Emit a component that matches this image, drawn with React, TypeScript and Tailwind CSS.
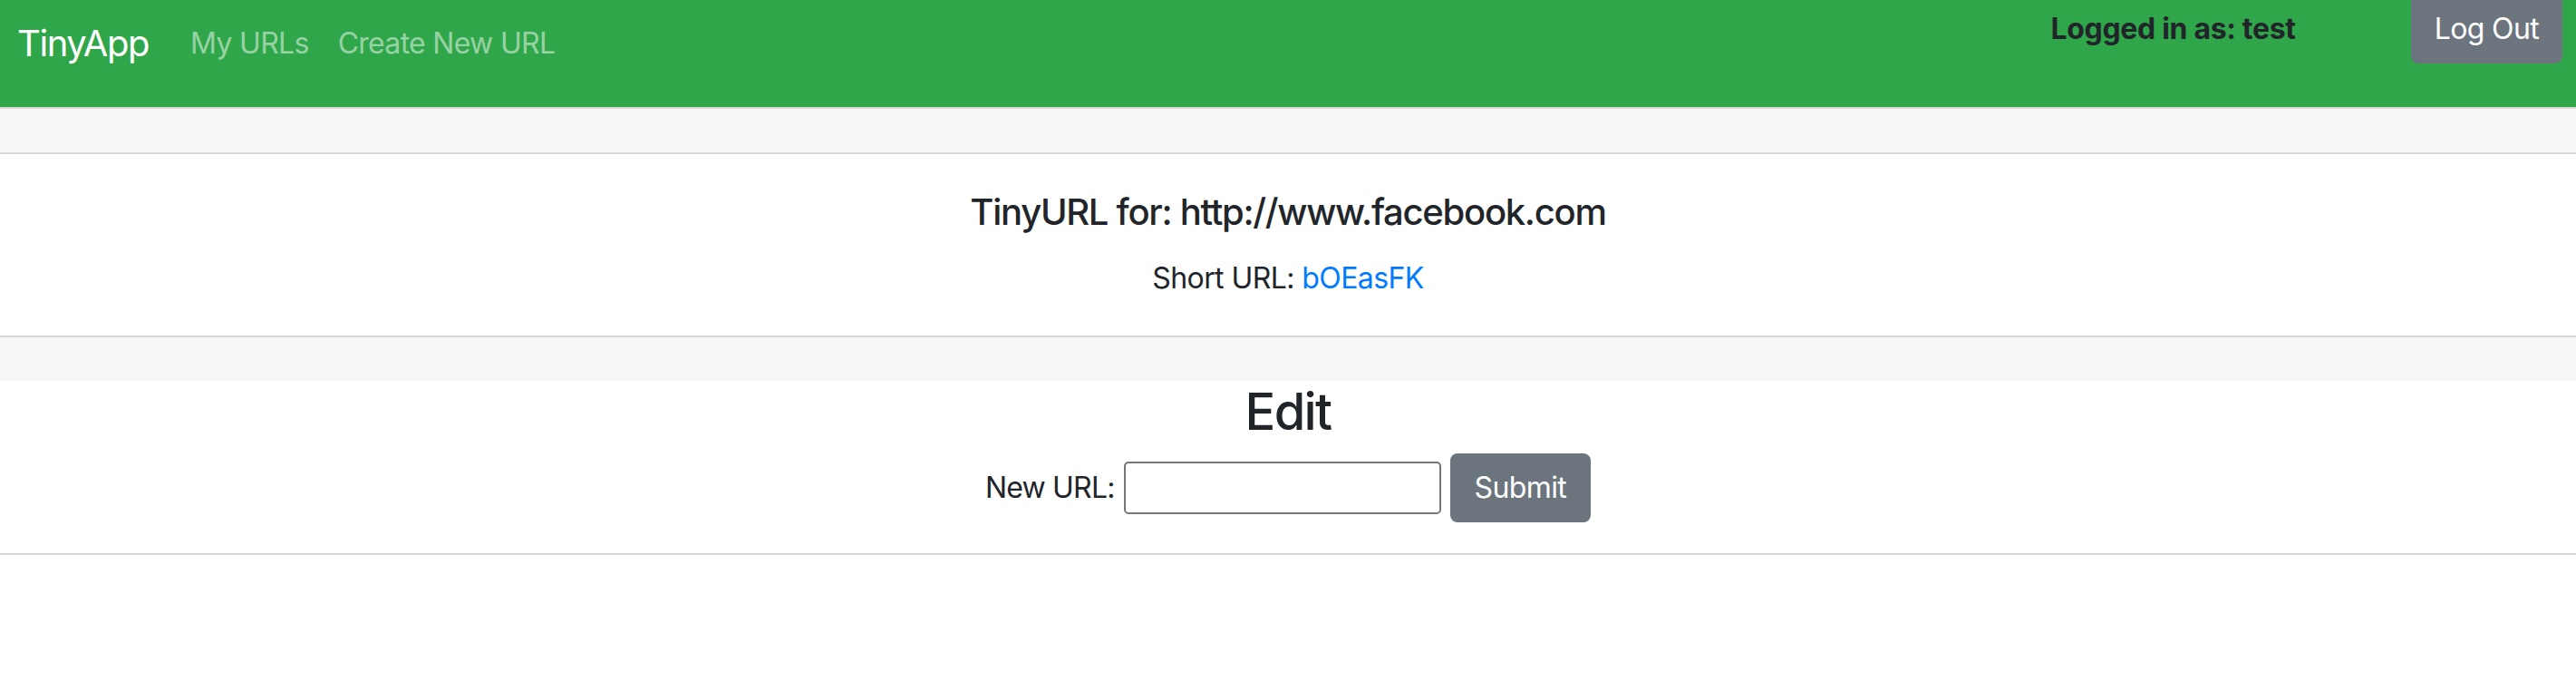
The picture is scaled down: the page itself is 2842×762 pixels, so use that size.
const navLinks = ["My URLs", "Create New URL"];

function NavBar() {
  return (
    <nav className="flex h-[118px] items-start justify-between bg-[#30a64a]">
      <div className="flex items-center pl-[19px] pt-[18px]">
        <a className="mr-[30px] text-[40px] leading-[60px] tracking-[-0.035em] text-white">TinyApp</a>
        {navLinks.map((link) => (
          <a key={link} className="px-[16px] text-[32px] leading-[48px] tracking-[-0.022em] text-white/50">
            {link}
          </a>
        ))}
      </div>
      <div className="flex items-start gap-[127px] pr-[15px]">
        <span className="mt-[8px] text-[32px] font-bold leading-[48px] tracking-[-0.01em] text-[#212529]">Logged in as: test</span>
        <button className="-mt-[6px] h-[76px] rounded-[8px] border-2 border-[#6c757d] bg-[#6c757d] px-[24px] text-[32px] leading-[48px] tracking-[-0.02em] text-white">
          Log Out
        </button>
      </div>
    </nav>
  );
}

export default function App() {
  return (
    <div className="min-h-screen bg-white font-['Inter',sans-serif] text-[#212529]">
      <NavBar />

      <div className="h-[52px] border-y-2 border-[#d9d9d9] bg-[#f6f6f6]" />

      <div className="flex h-[200px] flex-col items-center pt-[40px]">
        <h5 className="text-[40px] font-medium leading-[48px] tracking-[-0.032em]">TinyURL for: http://www.facebook.com</h5>
        <p className="mt-[25px] text-[32px] leading-[48px] tracking-[-0.018em]">
          Short URL: <a className="text-[#007bff]">bOEasFK</a>
        </p>
      </div>

      <div className="h-[50px] border-t-2 border-[#d9d9d9] bg-[#f6f6f6]" />

      <div className="flex h-[192px] flex-col items-center border-b-2 border-[#d9d9d9] pt-[1px]">
        <h3 className="text-[56px] font-medium leading-[67px] tracking-[-0.03em]">Edit</h3>
        <form className="mt-[12px] flex items-center gap-[10px]">
          <label className="text-[32px] leading-[48px] tracking-[-0.025em]">New URL:</label>
          <input type="text" className="h-[58px] w-[350px] rounded-[5px] border-2 border-[#767676] bg-white" />
          <button type="button" className="h-[76px] rounded-[8px] border-2 border-[#6c757d] bg-[#6c757d] px-[25px] text-[32px] leading-[48px] tracking-[-0.02em] text-white">
            Submit
          </button>
        </form>
      </div>
    </div>
  );
}
